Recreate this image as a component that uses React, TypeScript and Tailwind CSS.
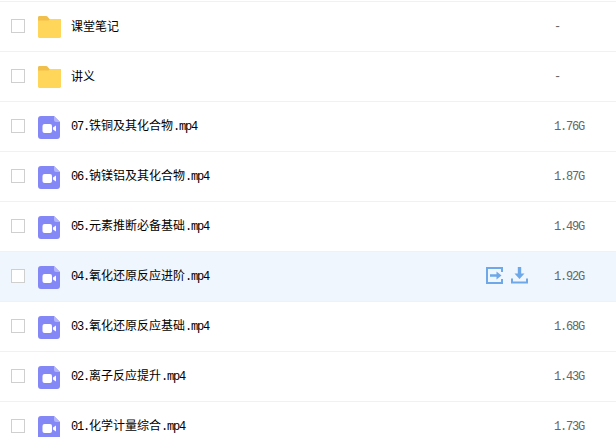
const files = [
  { prefix: "", name: "课堂笔记", ext: "", size: "-", folder: true },
  { prefix: "", name: "讲义", ext: "", size: "-", folder: true },
  { prefix: "07.", name: "铁铜及其化合物", ext: ".mp4", size: "1.76G" },
  { prefix: "06.", name: "钠镁铝及其化合物", ext: ".mp4", size: "1.87G" },
  { prefix: "05.", name: "元素推断必备基础", ext: ".mp4", size: "1.49G" },
  { prefix: "04.", name: "氧化还原反应进阶", ext: ".mp4", size: "1.92G", active: true },
  { prefix: "03.", name: "氧化还原反应基础", ext: ".mp4", size: "1.68G" },
  { prefix: "02.", name: "离子反应提升", ext: ".mp4", size: "1.43G" },
  { prefix: "01.", name: "化学计量综合", ext: ".mp4", size: "1.73G" },
]

function FolderIcon() {
  return (
    <svg width="23" height="22" viewBox="0 0 23 22" className="shrink-0">
      <path d="M0 1.5C0 .7.6 0 1.4 0h6.8c.5 0 .9.2 1.2.6L11.5 3H21.6c.8 0 1.4.6 1.4 1.4V8H0z" fill="#f0bf4c" />
      <path d="M0 4.5h10.5L12 3h9.6c.8 0 1.4.6 1.4 1.4v16.2c0 .8-.6 1.4-1.4 1.4H1.4C.6 22 0 21.4 0 20.6z" fill="#ffd659" />
    </svg>
  )
}

function VideoIcon() {
  return (
    <svg width="22" height="23" viewBox="0 0 22 23" className="shrink-0">
      <path d="M3 0h13l6 6v14a3 3 0 0 1-3 3H3a3 3 0 0 1-3-3V3a3 3 0 0 1 3-3z" fill="#8487f6" />
      <path d="M16 0l6 6h-4a2 2 0 0 1-2-2z" fill="#b3b5fa" />
      <rect x="4.5" y="8" width="9.5" height="9" rx="2" fill="#fff" />
      <path d="M15 11.5l3-2v6l-3-2z" fill="#fff" />
    </svg>
  )
}

function MoveIcon() {
  return (
    <svg width="17" height="17" viewBox="0 0 17 17">
      <path d="M16 5V1H1v15h15v-4" fill="none" stroke="#6fa8e8" strokeWidth="2" />
      <path d="M4 7.2h6.5V4.5L15.5 8.5l-5 4V9.8H4z" fill="#6fa8e8" />
    </svg>
  )
}

function DownloadIcon() {
  return (
    <svg width="17" height="17" viewBox="0 0 17 17">
      <path d="M6.8 0h3.4v6.5h3.3L8.5 12 3.5 6.5h3.3z" fill="#6fa8e8" />
      <path d="M1 11.5V15.5H16V11.5" fill="none" stroke="#6fa8e8" strokeWidth="2" />
    </svg>
  )
}

function Ascii({ children }: { children: string }) {
  return <span className="font-['Liberation_Mono',monospace] text-xs tracking-[-1.2px]">{children}</span>
}

export default function App() {
  return (
    <div className="h-[437px] w-[616px] overflow-hidden bg-white pt-px font-['Noto_Sans_CJK_SC',sans-serif] text-xs">
      <div className="h-px bg-[#f0f1f3]" />
      {files.map((file) => (
        <div
          key={file.name}
          className={`flex h-[50px] shrink-0 items-center border-b border-[#f0f1f3] pb-[2px] pl-[11px] ${
            file.active ? "bg-[#eff6fd]" : "bg-white"
          }`}
        >
          <div className="h-[14px] w-[14px] shrink-0 border border-[#cfcfcf] bg-white" />
          <div className={`ml-[13px] flex w-[33px] shrink-0 items-center ${file.folder ? "pt-[2px]" : "pt-[4px]"}`}>
            {file.folder ? <FolderIcon /> : <VideoIcon />}
          </div>
          <div className="w-[415px] shrink-0 text-black">
            {file.prefix && <Ascii>{file.prefix}</Ascii>}
            {file.name}
            {file.ext && <Ascii>{file.ext}</Ascii>}
          </div>
          <div className="flex w-[68px] shrink-0 items-center gap-2">
            {file.active && (
              <>
                <MoveIcon />
                <DownloadIcon />
              </>
            )}
          </div>
          <div className="text-[#666]">
            <Ascii>{file.size}</Ascii>
          </div>
        </div>
      ))}
    </div>
  )
}
